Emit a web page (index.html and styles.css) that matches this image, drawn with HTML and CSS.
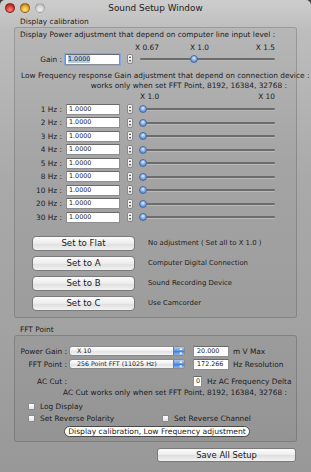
FILE: index.html
```html
<!DOCTYPE html>
<html lang="en">
<head>
    <meta charset="UTF-8">
    <meta name="viewport" content="width=device-width, initial-scale=1.0">
    <title>Sound Setup Window</title>
    <link rel="stylesheet" href="styles.css">
</head>
<body>

    <div class="window">
        <div class="titlebar">
            <div class="lights">
                <span class="light red"></span>
                <span class="light yellow"></span>
                <span class="light off"></span>
            </div>
            <div class="title">Sound Setup Window</div>
            <div></div>
        </div>

        <div class="group-label">Display calibration</div>
        <div class="group cal">
            <div class="line first">Display Power adjustment that depend on computer line input level :</div>
            <div class="scale gain-scale"><span>X 0.67</span><span>X 1.0</span><span>X 1.5</span></div>
            <div class="row gain-row">
                <label class="row-label">Gain :</label>
                <div class="field focus"><span class="sel">1.0000</span></div>
                <span class="stepper"></span>
                <div class="slider"><span class="knob" style="left: 50px"></span></div>
            </div>

            <div class="line low">Low Frequency response Gain adjustment that depend on connection device :</div>
            <div class="line right">works only when set FFT Point, 8192, 16384, 32768 :</div>
            <div class="scale hz-scale"><span>X 1.0</span><span>X 10</span></div>

            <div class="hz-rows">
                <div class="row hz"><label class="row-label">1 Hz :</label><div class="field">1.0000</div><span class="stepper"></span><div class="slider"><span class="knob"></span></div></div>
                <div class="row hz"><label class="row-label">2 Hz :</label><div class="field">1.0000</div><span class="stepper"></span><div class="slider"><span class="knob"></span></div></div>
                <div class="row hz"><label class="row-label">3 Hz :</label><div class="field">1.0000</div><span class="stepper"></span><div class="slider"><span class="knob"></span></div></div>
                <div class="row hz"><label class="row-label">4 Hz :</label><div class="field">1.0000</div><span class="stepper"></span><div class="slider"><span class="knob"></span></div></div>
                <div class="row hz"><label class="row-label">5 Hz :</label><div class="field">1.0000</div><span class="stepper"></span><div class="slider"><span class="knob"></span></div></div>
                <div class="row hz"><label class="row-label">8 Hz :</label><div class="field">1.0000</div><span class="stepper"></span><div class="slider"><span class="knob"></span></div></div>
                <div class="row hz"><label class="row-label">10 Hz :</label><div class="field">1.0000</div><span class="stepper"></span><div class="slider"><span class="knob"></span></div></div>
                <div class="row hz"><label class="row-label">20 Hz :</label><div class="field">1.0000</div><span class="stepper"></span><div class="slider"><span class="knob"></span></div></div>
                <div class="row hz"><label class="row-label">30 Hz :</label><div class="field">1.0000</div><span class="stepper"></span><div class="slider"><span class="knob"></span></div></div>
            </div>

            <div class="presets">
                <div class="preset"><button class="btn">Set to Flat</button><span class="desc">No adjustment ( Set all to X 1.0 )</span></div>
                <div class="preset"><button class="btn">Set to A</button><span class="desc">Computer Digital Connection</span></div>
                <div class="preset"><button class="btn">Set to B</button><span class="desc">Sound Recording Device</span></div>
                <div class="preset"><button class="btn">Set to C</button><span class="desc">Use Camcorder</span></div>
            </div>
        </div>

        <div class="group-label second">FFT Point</div>
        <div class="group fft">
            <div class="frow">
                <label class="flabel">Power Gain :</label>
                <div class="popup"><span>X 10</span></div>
                <div class="field ffield">20.000</div>
                <span class="unit">m V Max</span>
            </div>
            <div class="frow">
                <label class="flabel">FFT Point :</label>
                <div class="popup"><span>256 Point FFT (11025 Hz)</span></div>
                <div class="field ffield">172.266</div>
                <span class="unit">Hz Resolution</span>
            </div>
            <div class="frow ac">
                <label class="flabel">AC Cut :</label>
                <div class="field small">0</div>
                <span class="unit">Hz AC Frequency Delta</span>
            </div>
            <div class="line right ac-note">AC Cut works only when set FFT Point, 8192, 16384, 32768 :</div>
            <div class="checks">
                <label class="check"><span class="box"></span>Log Display</label>
            </div>
            <div class="checks">
                <label class="check"><span class="box"></span>Set Reverse Polarity</label>
                <label class="check"><span class="box"></span>Set Reverse Channel</label>
            </div>
            <button class="pill">Display calibration, Low Frequency adjustment</button>
        </div>

        <div class="save-row">
            <button class="btn save">Save All Setup</button>
        </div>
    </div>

</body>
</html>
```

FILE: styles.css
```css
body {
    margin: 0;
    background-color: #3a3a3a;
    font-family: "DejaVu Sans", sans-serif;
    font-size: 7.4px;
    color: #1c1c1c;
}

.window {
    width: 311px;
    height: 472px;
    overflow: hidden;
    border-radius: 5px 5px 0 0;
    background: linear-gradient(#cdcdcd 0, #bdbdbd 30px, #a9a9a9 180px, #a2a2a2 330px, #989898 472px);
}

/* title bar */
.titlebar {
    display: grid;
    grid-template-columns: 1fr auto 1fr;
    align-items: center;
    height: 16px;
}

.lights {
    display: flex;
    gap: 5px;
    margin-left: 5px;
}

.light {
    width: 10px;
    height: 10px;
    border-radius: 50%;
    box-sizing: border-box;
    border: 1px solid rgba(0, 0, 0, 0.35);
}

.red {
    background: radial-gradient(circle at 50% 70%, #ff8a80 0, #e0443e 45%, #8f1510 100%);
}

.yellow {
    background: radial-gradient(circle at 50% 70%, #ffe28a 0, #f3b232 45%, #9a6200 100%);
}

.off {
    background: radial-gradient(circle at 50% 70%, #f2f2f2 0, #d4d4d4 50%, #a8a8a8 100%);
    border-color: rgba(0, 0, 0, 0.18);
}

.title {
    font-size: 8.9px;
    color: #222;
}

/* group boxes */
.group-label {
    height: 11px;
    line-height: 11px;
    padding-left: 20px;
}

.group-label.second {
    height: 11px;
    padding-top: 6px;
}

.group {
    box-sizing: border-box;
    width: 283px;
    margin-left: 14px;
    border: 1px solid rgba(0, 0, 0, 0.16);
    border-radius: 3px;
    background-color: rgba(0, 0, 0, 0.035);
}

.cal {
    height: 291px;
    padding-top: 1px;
}

.fft {
    height: 107px;
    padding-top: 9px;
}

.line {
    height: 10px;
    line-height: 10px;
    padding-left: 6px;
    white-space: nowrap;
}

.line.first {
    height: 12px;
    line-height: 12px;
    padding-left: 5px;
}

.line.low {
    margin-top: 6px;
}

.line.right {
    text-align: right;
    padding-right: 9px;
}

.scale {
    display: flex;
    height: 10px;
    line-height: 10px;
}

.gain-scale {
    margin: 2px 0 0 120px;
    width: 140px;
}

.gain-scale span:nth-child(2) {
    margin-left: 31px;
}

.gain-scale span:nth-child(3) {
    margin-left: auto;
}

.hz-scale {
    margin: 1px 0 0 125px;
    width: 135px;
    justify-content: space-between;
}

/* slider rows */
.row {
    display: flex;
    align-items: center;
    height: 12px;
}

.hz-rows {
    margin-top: 0.5px;
}

.row.hz {
    height: 13.5px;
}

.row-label {
    width: 47px;
    text-align: right;
}

.field {
    box-sizing: border-box;
    width: 54px;
    height: 11px;
    margin-left: 4px;
    padding-left: 2px;
    background-color: #fff;
    border: 1px solid #8e8e8e;
    border-top-color: #6a6a6a;
    font-size: 6.4px;
    line-height: 9px;
}

.gain-row .field {
    width: 55px;
    margin-left: 3px;
}

.field.focus {
    box-shadow: 0 0 0 1px #7fa7dc, 0 0 2px 1px #9cbde8;
}

.sel {
    background-color: #b2cdf0;
}

.stepper {
    position: relative;
    box-sizing: border-box;
    width: 6px;
    height: 10px;
    margin-left: 7px;
    background: linear-gradient(#ffffff, #e2e2e2);
    border: 1px solid #8a8a8a;
    border-radius: 2px;
}

.stepper::before,
.stepper::after {
    content: "";
    position: absolute;
    left: 1px;
    border-left: 1px solid transparent;
    border-right: 1px solid transparent;
}

.stepper::before {
    top: 1px;
    border-bottom: 2px solid #333;
}

.stepper::after {
    bottom: 1px;
    border-top: 2px solid #333;
}

.slider {
    position: relative;
    width: 135px;
    height: 2px;
    margin-left: 7px;
    border-radius: 1px;
    background-color: #6c6c6c;
    box-shadow: 0 1px 0 #b9b9b9;
}

.knob {
    position: absolute;
    top: -3px;
    left: -1px;
    box-sizing: border-box;
    width: 8px;
    height: 8px;
    border-radius: 50%;
    border: 1px solid #4a6a9a;
    background: radial-gradient(circle at 50% 35%, #e6f0ff 0, #8fb4ea 40%, #3c76cf 100%);
}

/* preset buttons */
.presets {
    margin-top: 11.5px;
}

.preset {
    display: flex;
    align-items: center;
    height: 15px;
    margin-left: 17px;
}

.preset + .preset {
    margin-top: 5px;
}

.btn {
    box-sizing: border-box;
    width: 103px;
    height: 15px;
    padding: 0;
    border: 1px solid #7a7a7a;
    border-radius: 4px;
    background: linear-gradient(#fdfdfd, #ececec 50%, #dedede 52%, #f2f2f2);
    font-family: "DejaVu Sans", sans-serif;
    font-size: 8.6px;
    color: #1a1a1a;
}

.desc {
    margin-left: 13px;
    font-size: 6.9px;
}

/* FFT rows */
.frow {
    display: flex;
    align-items: center;
    height: 12px;
}

.frow + .frow {
    margin-top: 1px;
}

.frow.ac {
    margin-top: 5px;
}

.flabel {
    width: 52px;
    text-align: right;
}

.popup {
    position: relative;
    box-sizing: border-box;
    width: 116px;
    height: 10px;
    margin-left: 2px;
    padding-left: 7px;
    border: 1px solid #8a8a8a;
    border-radius: 3px;
    background: linear-gradient(#ffffff, #efefef 50%, #e2e2e2 52%, #f4f4f4);
    font-size: 6.3px;
    line-height: 8px;
    overflow: hidden;
}

.popup::after {
    content: "";
    position: absolute;
    top: 0;
    right: 0;
    width: 10px;
    height: 8px;
    border-left: 1px solid #5a7fb5;
    background:
        linear-gradient(to top, transparent 0 5px, transparent 5px) ,
        linear-gradient(#a9c8f2, #5f95e0 50%, #3f7bd6 52%, #8cb8f0);
}

.popup::before {
    content: "\25B4\A\25BE";
    white-space: pre;
    position: absolute;
    top: -1px;
    right: 2px;
    z-index: 1;
    color: #fff;
    font-size: 5px;
    line-height: 4.5px;
}

.ffield {
    width: 36px;
    margin-left: 8px;
    padding-left: 3px;
}

.field.small {
    width: 9px;
    margin-left: 126px;
    padding-left: 2px;
}

.unit {
    margin-left: 4px;
}

.field.small + .unit {
    margin-left: 5px;
}

.ac-note {
    margin-top: 1px;
    padding-right: 8px;
}

.checks {
    display: flex;
    align-items: center;
    height: 10px;
    margin-top: 2px;
    padding-left: 13px;
}

.ac-note + .checks {
    margin-top: 3px;
}

.check {
    display: flex;
    align-items: center;
    width: 138px;
}

.box {
    box-sizing: border-box;
    width: 7px;
    height: 7px;
    margin-right: 5px;
    border: 1px solid #8a8a8a;
    border-radius: 1px;
    background: linear-gradient(#ffffff, #e4e4e4);
}

.pill {
    display: block;
    box-sizing: border-box;
    width: 186px;
    height: 11px;
    margin: 3px 0 0 49px;
    padding: 0;
    border: 1px solid #4a4a4a;
    border-radius: 6px;
    background-color: #fff;
    font-family: "DejaVu Sans", sans-serif;
    font-size: 7.6px;
    line-height: 9px;
    color: #1a1a1a;
}

.save-row {
    display: flex;
    justify-content: flex-end;
    margin-top: 6px;
    padding-right: 15px;
}

.btn.save {
    width: 139px;
    height: 14px;
    border-radius: 3px;
    font-size: 8.4px;
}
```
